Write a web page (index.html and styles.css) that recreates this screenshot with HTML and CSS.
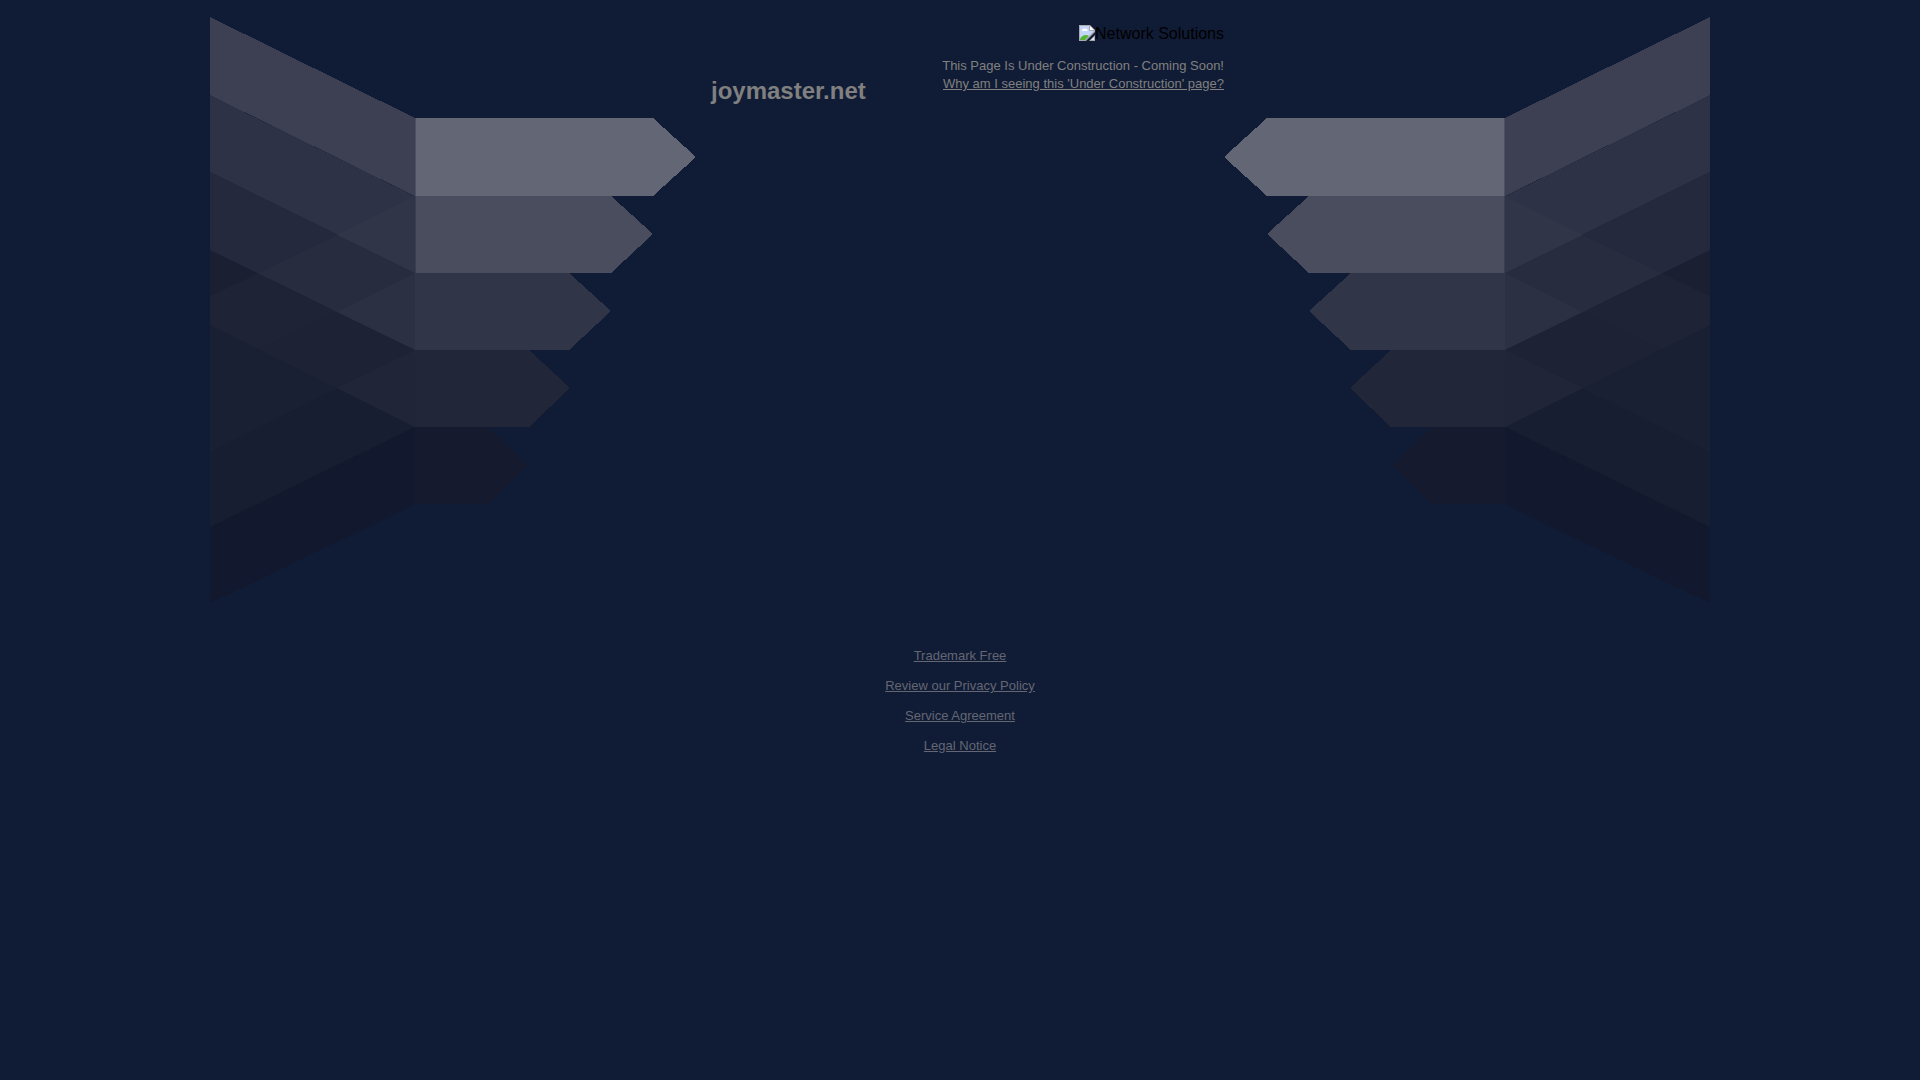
FILE: index.html
```html
<!DOCTYPE html>
<html lang="en">
<head>
  <meta charset="UTF-8">
  <meta name="viewport" content="width=device-width, initial-scale=1.0">
  <title>joymaster.net</title>
  <link rel="stylesheet" href="styles.css">
</head>
<body>
  <div class="container">
    <svg class="wing" viewBox="0 0 486 620" aria-hidden="true">
      <g id="wing">
        <!-- folded side, back to front -->
        <polygon fill="#12182d" points="0,249 205,350 205,504 0,603"/>
        <polygon fill="#181e32" points="0,249 205,350 205,427 0,527"/>
        <polygon fill="#1a2033" points="0,249 205,350 0,452"/>
        <polygon fill="#1d2235" points="0,249 205,350 205,427 0,325"/>
        <polygon fill="#202538" points="205,350 205,427 127,388"/>
        <polygon fill="#1e2336" points="48,273 127,312 48,349 0,325 0,296"/>
        <polygon fill="#1a1f32" points="0,250 48,273 0,296"/>
        <polygon fill="#24293d" points="0,172 205,273 205,350 0,250"/>
        <polygon fill="#272c3e" points="127,235 205,273 127,312 48,273"/>
        <polygon fill="#2b3043" points="205,273 205,350 127,312"/>
        <polygon fill="#2d3246" points="0,95 205,196 205,273 0,172"/>
        <polygon fill="#313548" points="205,196 205,273 127,235"/>
        <polygon fill="#3c4052" points="0,17 205,118 205,196 0,95" shape-rendering="crispEdges"/>
        <!-- arrows -->
        <g shape-rendering="crispEdges">
          <polygon fill="#636674" points="206,118 443,118 486,157 443,196 206,196"/>
          <polygon fill="#4a4d5d" points="206,196 401,196 443,234 401,273 206,273"/>
          <polygon fill="#303547" points="205,273 359,273 401,311 359,350 205,350"/>
          <polygon fill="#212639" points="205,350 319,350 360,388 319,427 205,427"/>
          <polygon fill="#151a2e" points="205,427 278,427 318,465 278,504 205,504"/>
          <rect fill="#4c4f60" x="205" y="118" width="1" height="78"/>
          <rect fill="#3b3e4f" x="205" y="196" width="1" height="77"/>
        </g>
      </g>
    </svg>

    <div class="header">
      <h1>joymaster.net</h1>
      <div class="info">
        <div class="logo">
          <svg width="16" height="16" viewBox="0 0 16 16" aria-hidden="true">
            <path fill="#a9a9b2" d="M0 0h11l5 5v2L7 16H0z"/>
            <path fill="#c4d6f7" d="M1 1h9v5h5L6 15H1z"/>
            <path fill="#fff" d="M3 6a1.500 1.500 0 0 1 1-2 2 2 0 0 1 3 0 1 1 0 0 1 1 2z"/>
            <path fill="#57b336" d="M1 14c2-4 6-5 9-3l-4 4H1z"/>
            <path fill="#fff" d="M11 1v4h4z"/>
            <path fill="#a9a9b2" d="M16 10v6h-6z"/>
            <path fill="#e4e9f4" d="M15 12v3h-3z"/>
          </svg><span>Network Solutions</span>
        </div>
        <p>This Page Is Under Construction - Coming Soon!</p>
        <p><a href="#">Why am I seeing this 'Under Construction' page?</a></p>
      </div>
    </div>

    <svg class="wing" viewBox="0 0 486 620" aria-hidden="true">
      <use href="#wing" transform="translate(486 0) scale(-1 1)"/>
    </svg>
  </div>

  <div class="footer">
    <a href="#">Trademark Free</a>
    <a href="#">Review our Privacy Policy</a>
    <a href="#">Service Agreement</a>
    <a href="#">Legal Notice</a>
  </div>
</body>
</html>
```
FILE: styles.css
```css
body {
  font-family: Arial, "Liberation Sans", sans-serif;
  margin: 0;
  background-color: #101c35;
  color: #808080;
}

.container {
  display: flex;
  align-items: flex-start;
  max-width: 1500px;
  margin: 0 auto;
}

.wing {
  display: block;
  flex: 0 1 486px;
  min-width: 0;
}

.header {
  display: flex;
  flex: 1 0 auto;
  justify-content: space-between;
  align-items: flex-start;
  padding-top: 25px;
}

h1 {
  margin: 52px 0 0 15px;
  font-size: 24px;
  line-height: 28px;
}

.info {
  font-size: 13px;
  line-height: 18px;
  text-align: right;
}

.info p {
  margin: 0;
}

.info a {
  color: #808080;
}

.logo {
  display: flex;
  justify-content: flex-end;
  align-items: flex-start;
  margin-bottom: 14px;
  font-size: 16px;
  color: #000;
}

.footer {
  display: flex;
  flex-direction: column;
  align-items: center;
  gap: 12px;
  padding: 27px 0;
}

.footer a {
  font-size: 13px;
  line-height: 18px;
  color: #646674;
}
```
